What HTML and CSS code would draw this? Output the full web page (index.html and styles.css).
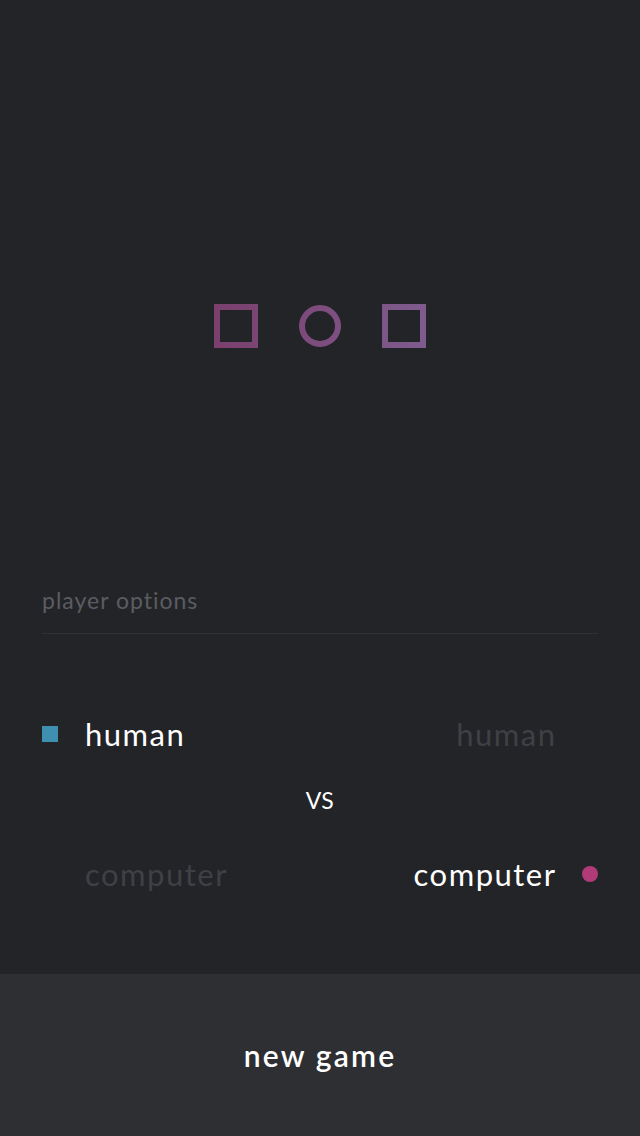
FILE: index.html
```html
<!DOCTYPE html>
<html lang="en">
<head>
    <meta charset="UTF-8">
    <meta name="viewport" content="width=device-width, initial-scale=1.0">
    <title>tic tac toe</title>
    <link rel="stylesheet" href="styles.css">
</head>
<body>
    <div class="screen">
        <div class="logo">
            <svg width="212" height="44" viewBox="0 0 212 44">
                <defs>
                    <linearGradient id="logoGrad" x1="0" y1="0" x2="212" y2="0" gradientUnits="userSpaceOnUse">
                        <stop offset="0" stop-color="#7b3f6d"/>
                        <stop offset="1" stop-color="#7f5b8e"/>
                    </linearGradient>
                </defs>
                <rect x="3" y="3" width="38" height="38" fill="none" stroke="url(#logoGrad)" stroke-width="6"/>
                <circle cx="106" cy="22" r="18" fill="none" stroke="url(#logoGrad)" stroke-width="6"/>
                <rect x="171" y="3" width="38" height="38" fill="none" stroke="url(#logoGrad)" stroke-width="6"/>
            </svg>
        </div>

        <div class="options">
            <div class="options-title">player options</div>

            <div class="player-row first">
                <div class="player left">
                    <span class="marker square"></span>
                    <span class="name active">human</span>
                </div>
                <div class="player right">
                    <span class="name">human</span>
                    <span class="marker"></span>
                </div>
            </div>

            <div class="vs">VS</div>

            <div class="player-row">
                <div class="player left">
                    <span class="marker"></span>
                    <span class="name">computer</span>
                </div>
                <div class="player right">
                    <span class="name active">computer</span>
                    <span class="marker dot"></span>
                </div>
            </div>
        </div>

        <div class="footer">
            <button class="new-game">new game</button>
        </div>
    </div>
</body>
</html>
```

FILE: styles.css
```css
body {
    margin: 0;
    background-color: #232428;
    font-family: Lato, "Open Sans", sans-serif;
    color: #fff;
}
.screen {
    display: flex;
    flex-direction: column;
    height: 1136px;
}
.logo {
    display: flex;
    justify-content: center;
    padding-top: 304px;
}
.logo svg {
    display: block;
}
.options {
    padding: 0 42px;
}
.options-title {
    margin-top: 237px;
    padding-bottom: 18px;
    border-bottom: 1px solid #303136;
    font-size: 23px;
    line-height: 30px;
    color: #5b5c61;
    letter-spacing: 1px;
}
.player-row {
    display: grid;
    grid-template-columns: 1fr 1fr;
    height: 40px;
    margin-top: 39px;
}
.player-row.first {
    margin-top: 80px;
}
.player {
    display: flex;
    align-items: center;
    gap: 27px;
}
.player.right {
    justify-content: flex-end;
}
.player.right .name {
    margin-right: -1.5px;
}
.marker {
    width: 16px;
    height: 16px;
    flex-shrink: 0;
}
.marker.square {
    background-color: #3f8fb1;
}
.marker.dot {
    border-radius: 50%;
    background-color: #b13b78;
}
.name {
    font-size: 31px;
    line-height: 40px;
    color: #3f4045;
    letter-spacing: 1.5px;
}
.name.active {
    color: #fff;
}
.vs {
    margin-top: 31px;
    text-align: center;
    font-size: 23px;
    line-height: 30px;
    letter-spacing: 0.5px;
}
.footer {
    margin-top: auto;
    height: 162px;
    background-color: #2e2f33;
    display: flex;
    align-items: center;
    justify-content: center;
}
.new-game {
    background: none;
    border: none;
    color: #fff;
    font-family: Lato, "Open Sans", sans-serif;
    font-size: 30px;
    font-weight: 600;
    letter-spacing: 2.2px;
    padding: 0;
    cursor: pointer;
}
```
